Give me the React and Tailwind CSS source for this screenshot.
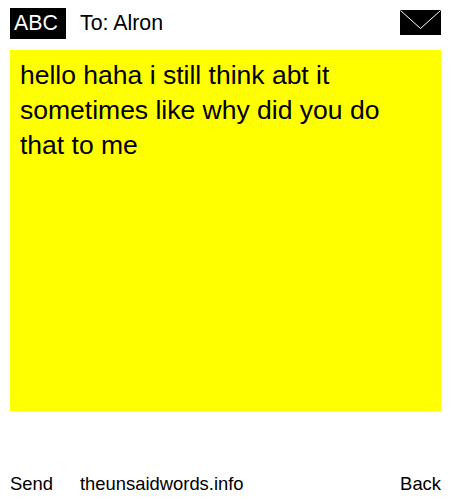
import React from 'react';

const Envelope = () => (
  <svg width="41" height="25" viewBox="0 0 41 25" className="block">
    <rect width="41" height="25" fill="#000" />
    <path d="M0.5 0.5 L20.5 18.5 L40.5 0.5" fill="none" stroke="#fff" strokeWidth="1" />
  </svg>
);

const App = () => {
  return (
    <div className="w-[450px] h-[500px] bg-white text-black flex flex-col font-['Liberation_Sans',Arial,sans-serif]">
      {/* Header */}
      <div className="flex items-start h-[31px] mt-2 ml-2.5 mr-[9px]">
        <div className="w-14 h-[31px] pr-1 bg-black text-white text-[21.33px] leading-[30px] text-center">ABC</div>
        <div className="ml-3.5 text-[21.33px] leading-[30px]">To: Alron</div>
        <div className="ml-auto mt-0.5">
          <Envelope />
        </div>
      </div>

      {/* Message */}
      <div className="mt-[11px] ml-2.5 mr-[9px] h-[361px] bg-[#ffff00] pl-2.5 pr-[30px] py-2 text-[26.5px] leading-[35px]">
        hello haha i still think abt it sometimes like why did you do that to me
      </div>

      {/* Footer */}
      <div className="flex items-center mt-auto mb-[2px] ml-2.5 mr-[9px] text-[18.4px]">
        <span className="w-[70px]">Send</span>
        <span>theunsaidwords.info</span>
        <span className="ml-auto">Back</span>
      </div>
    </div>
  );
};

export default App;
